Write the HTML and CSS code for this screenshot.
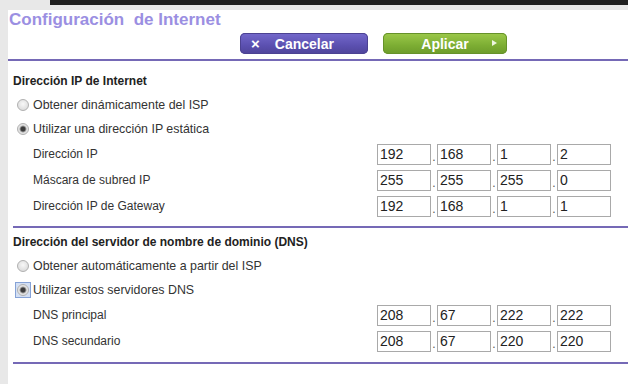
FILE: index.html
```html
<!DOCTYPE html>
<html lang="es">
<head>
    <meta charset="UTF-8">
    <title>Configuración de Internet</title>
    <link rel="stylesheet" href="styles.css">
</head>
<body>
    <div class="topbar"></div>

    <div class="panel">
        <h1 class="title">Configuración&nbsp; de Internet</h1>

        <div class="actions">
            <button class="btn btn-cancel"><span class="btn-x">×</span>Cancelar</button>
            <button class="btn btn-apply">Aplicar<span class="btn-arrow"></span></button>
        </div>

        <!-- Internet IP -->
        <div class="section section-ip">
            <h2 class="section-title">Dirección IP de Internet</h2>
            <label class="radio-row"><span class="radio-box"><input type="radio" name="ip"></span>Obtener dinámicamente del ISP</label>
            <label class="radio-row"><span class="radio-box"><input type="radio" name="ip" checked></span>Utilizar una dirección IP estática</label>

            <div class="field-row">
                <span class="field-label">Dirección IP</span>
                <input type="text" class="octet" value="192"><span class="dot">.</span>
                <input type="text" class="octet" value="168"><span class="dot">.</span>
                <input type="text" class="octet" value="1"><span class="dot">.</span>
                <input type="text" class="octet" value="2">
            </div>
            <div class="field-row">
                <span class="field-label">Máscara de subred IP</span>
                <input type="text" class="octet" value="255"><span class="dot">.</span>
                <input type="text" class="octet" value="255"><span class="dot">.</span>
                <input type="text" class="octet" value="255"><span class="dot">.</span>
                <input type="text" class="octet" value="0">
            </div>
            <div class="field-row">
                <span class="field-label">Dirección IP de Gateway</span>
                <input type="text" class="octet" value="192"><span class="dot">.</span>
                <input type="text" class="octet" value="168"><span class="dot">.</span>
                <input type="text" class="octet" value="1"><span class="dot">.</span>
                <input type="text" class="octet" value="1">
            </div>
        </div>

        <!-- DNS -->
        <div class="section section-dns">
            <h2 class="section-title">Dirección del servidor de nombre de dominio (DNS)</h2>
            <label class="radio-row"><span class="radio-box"><input type="radio" name="dns"></span>Obtener automáticamente a partir del ISP</label>
            <label class="radio-row"><span class="radio-box focused"><input type="radio" name="dns" checked></span>Utilizar estos servidores DNS</label>

            <div class="field-row">
                <span class="field-label">DNS principal</span>
                <input type="text" class="octet" value="208"><span class="dot">.</span>
                <input type="text" class="octet" value="67"><span class="dot">.</span>
                <input type="text" class="octet" value="222"><span class="dot">.</span>
                <input type="text" class="octet" value="222">
            </div>
            <div class="field-row">
                <span class="field-label">DNS secundario</span>
                <input type="text" class="octet" value="208"><span class="dot">.</span>
                <input type="text" class="octet" value="67"><span class="dot">.</span>
                <input type="text" class="octet" value="220"><span class="dot">.</span>
                <input type="text" class="octet" value="220">
            </div>
        </div>
    </div>
</body>
</html>
```

FILE: styles.css
```css
html, body {
    height: 100%;
}

body {
    margin: 0;
    background-color: #e8e8e8;
    font-family: "Liberation Sans", Arial, sans-serif;
    color: #333;
    overflow: hidden;
}

.topbar {
    height: 5px;
    margin-left: 50px;
    background-color: #202020;
}

.panel {
    margin: 5px 0 0 8px;
    background: white;
    height: 100%;
}

.title {
    margin: 0;
    padding-left: 1px;
    font-size: 17px;
    line-height: 20px;
    font-weight: bold;
    color: #9b8fe2;
}

.actions {
    display: flex;
    gap: 15px;
    margin-top: 3px;
    padding: 0 0 5px 232px;
    border-bottom: 2px solid #7569b6;
}

.btn {
    height: 21px;
    padding: 0;
    border: none;
    border-radius: 5px;
    font-family: "Liberation Sans", Arial, sans-serif;
    font-size: 14px;
    font-weight: bold;
    color: white;
    display: flex;
    align-items: center;
    cursor: pointer;
}

.btn-cancel {
    width: 128px;
    background: linear-gradient(#7469cc, #5b50b0 60%, #4f4499);
    box-shadow: inset 0 0 0 1px #4c4292;
}

.btn-x {
    font-size: 15px;
    margin: 0 15px 0 11px;
}

.btn-apply {
    width: 124px;
    justify-content: center;
    position: relative;
    background: linear-gradient(#9cc94a, #7cad33 60%, #6c9b2a);
    box-shadow: inset 0 0 0 1px #66922a;
}

.btn-arrow {
    position: absolute;
    right: 10px;
    top: 7px;
    border-left: 5px solid #eef5e0;
    border-top: 3.5px solid transparent;
    border-bottom: 3.5px solid transparent;
}

.section {
    margin-left: 5px;
    border-bottom: 2px solid #7569b6;
}

.section-ip {
    padding: 9px 0 7px;
}

.section-dns {
    padding: 3px 0 8px;
}

.section-title {
    margin: 0;
    font-size: 12px;
    line-height: 23px;
    font-weight: bold;
    color: #222;
}

.radio-row {
    display: flex;
    align-items: center;
    height: 24px;
    font-size: 12.4px;
}

.radio-box {
    display: flex;
    align-items: center;
    justify-content: center;
    width: 16px;
    height: 16px;
    margin: 0 2px 0 2px;
    box-sizing: border-box;
}

.radio-box.focused {
    background: #d3dff3;
    border: 1px solid #86a2d6;
}

.radio-box input {
    appearance: none;
    -webkit-appearance: none;
    width: 12px;
    height: 12px;
    margin: 0;
    border: 1px solid #b0b0b0;
    border-radius: 50%;
    background: radial-gradient(circle at 50% 40%, #f8f8f8, #d4d4d4);
}

.radio-box input:checked {
    background: radial-gradient(circle, #3c3c3c 0 2px, #8a8a8a 2.8px, #dcdcdc 3.8px, #f2f2f2 6px);
}

.field-row {
    display: flex;
    align-items: center;
    height: 26px;
    padding-left: 20px;
    font-size: 12px;
}

.field-label {
    width: 344px;
}

.octet {
    box-sizing: border-box;
    width: 54px;
    height: 21px;
    margin: 0;
    padding: 0 2px;
    border: 1px solid #a9a9a9;
    font-family: "Liberation Sans", Arial, sans-serif;
    font-size: 14px;
    color: #222;
}

.dot {
    width: 6px;
    text-align: center;
    font-size: 12px;
    color: #555;
    align-self: flex-end;
    line-height: 20px;
}
```
